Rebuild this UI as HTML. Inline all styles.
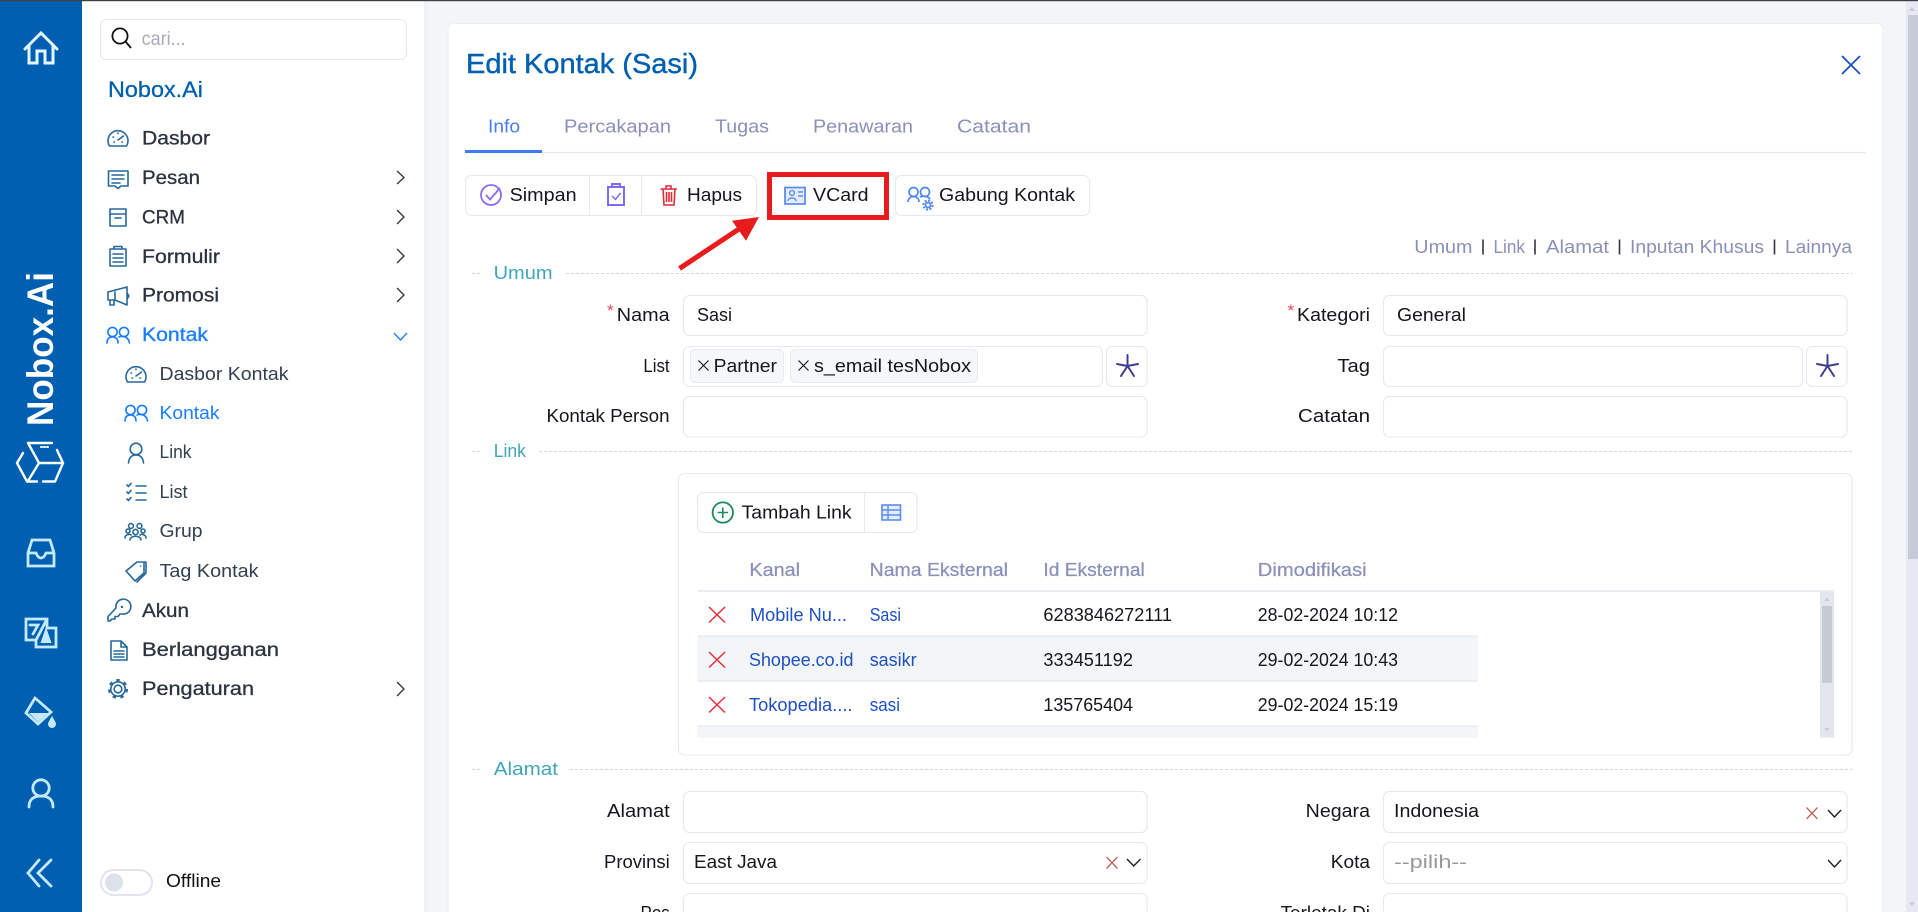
<!DOCTYPE html>
<html lang="id">
<head>
<meta charset="utf-8">
<title>Edit Kontak</title>
<style>
html,body{margin:0;padding:0;width:1918px;height:912px;overflow:hidden;background:#f3f6f9}
svg{display:block}
text{font-family:"Liberation Sans",sans-serif;white-space:pre}
.m{font-size:19.5px;fill:#2b3340;stroke:#2b3340;stroke-width:.3}
.s{font-size:18.5px;fill:#33404f}
.b{font-size:18px;fill:#14161c}
.t{font-size:18.5px;fill:#8a90b8}
.h{font-size:18.5px;fill:#8a90b8;stroke:#8a90b8;stroke-width:.25}
.sec{font-size:18.5px;fill:#3fa5b8}
.l{font-size:18.5px;fill:#1f4fc4}
.d{font-size:18.5px;fill:#15171c}
.f{fill:#fff;stroke:#e6e8ee;stroke-width:1.1}
.dash{stroke:#d4d6dc;stroke-width:1;stroke-dasharray:3 2;fill:none}
.ic{fill:none;stroke:#26689c;stroke-width:1.6;stroke-linejoin:round;stroke-linecap:round}
.ib{fill:none;stroke:#1a7dff;stroke-width:1.6;stroke-linejoin:round;stroke-linecap:round}
.r{fill:none;stroke:#c5eaff;stroke-width:2.8;stroke-linejoin:miter;stroke-linecap:round}
.x{fill:none;stroke:#e0303c;stroke-width:1.5}
.star{fill:none;stroke:#3f3d8f;stroke-width:2;stroke-linecap:round}
.chev{fill:none;stroke:#2b3340;stroke-width:1.3}
</style>
</head>
<body>
<svg width="1918" height="912" viewBox="0 0 1918 912" xmlns="http://www.w3.org/2000/svg">
<rect width="1918" height="912" fill="#f3f6f9"/>

<!-- page scrollbar -->
<rect x="1906" y="1" width="12" height="911" fill="#e6e9f1"/>
<rect x="1908" y="15" width="10" height="544" fill="#c6cbd7"/>
<path d="M1909 11l3-4 3 4z" fill="#c6cbd7"/>
<path d="M1909 902l3 4 3-4z" fill="#c6cbd7"/>

<!-- left rail -->
<rect x="0" y="0" width="82" height="912" fill="#005fb0"/>
<path d="M25 49 L41 33 L57 49 M29 46 V63 H37 V51 H45 V63 H53 V46" fill="none" stroke="#e4f5ff" stroke-width="3" stroke-linejoin="miter" stroke-linecap="round"/>
<text transform="translate(53 426) rotate(-90)" font-size="37" font-weight="700" fill="#fff" textLength="154" lengthAdjust="spacingAndGlyphs">Nobox.Ai</text>
<g fill="none" stroke="#fff" stroke-width="2.4" stroke-linecap="round" stroke-linejoin="round">
<path d="M23 453 L17 463 L27 481.500 H37"/>
<path d="M43 481.500 H55 L63 463 L57 450"/>
<path d="M28 443 H52"/>
<path d="M28 443 L39 463 H63 M39 463 L28 481"/>
<path d="M41 447h1M44 447h1M47 447h1" stroke-width="2"/>
</g>
<path d="M32 540 H50 L54 553 V566 H28 V553 Z M28 553 H36 Q38 558 41 558 Q44 558 46 553 H54" class="r"/>
<path d="M26 619 H47 V628 H56 V647 H36 V640 H26 Z M47 619 L36 640" class="r" stroke-width="2.400"/>
<path d="M30 625 H38 L33 634" class="r" stroke-width="2"/>
<path d="M46 627 L51.500 643 H40.500 Z" fill="#c5eaff"/>
<path d="M35 698 L51 712 L38 724 L26 713 Z" class="r" stroke-linejoin="round"/>
<path d="M29 713 H48 L38 722 Z" fill="#c5eaff"/>
<path d="M52 716 C49 721 48 723 48 724 A4 4 0 0 0 56 724 C56 723 55 721 52 716Z" fill="#c5eaff"/>
<circle cx="41" cy="788" r="8.2" class="r"/>
<path d="M29 807 C29 799 34 796 41 796 C48 796 53 799 53 807" class="r"/>
<path d="M39 860 L28 873 L39 886 M51 860 L38 873 L51 886" class="r"/>

<!-- sidebar -->
<rect x="82" y="0" width="342" height="912" fill="#fff"/>
<rect x="424" y="0" width="4" height="912" fill="#eef1f5"/>
<rect x="100.500" y="19.500" width="306" height="40" rx="6" class="f"/>
<circle cx="120" cy="36" r="7.600" fill="none" stroke="#111" stroke-width="1.800"/>
<path d="M125.500 41.500 L131 48" stroke="#111" stroke-width="1.800" fill="none"/>
<text x="141.600" y="45" font-size="19" fill="#a9abbb" textLength="44" lengthAdjust="spacingAndGlyphs">cari...</text>
<text x="108" y="97" font-size="22" fill="#0060af" stroke="#0060af" stroke-width=".3" textLength="95" lengthAdjust="spacingAndGlyphs">Nobox.Ai</text>

<text x="142" y="144.500" class="m" textLength="68" lengthAdjust="spacingAndGlyphs">Dasbor</text>
<text x="142" y="184" class="m" textLength="58" lengthAdjust="spacingAndGlyphs">Pesan</text>
<text x="142" y="223.500" class="m" textLength="43" lengthAdjust="spacingAndGlyphs">CRM</text>
<text x="142" y="263" class="m" textLength="78" lengthAdjust="spacingAndGlyphs">Formulir</text>
<text x="142" y="301.500" class="m" textLength="77" lengthAdjust="spacingAndGlyphs">Promosi</text>
<text x="142" y="341" class="m" style="fill:#1a7dff;stroke:#1a7dff" textLength="66" lengthAdjust="spacingAndGlyphs">Kontak</text>
<text x="159.500" y="380" class="s" textLength="129" lengthAdjust="spacingAndGlyphs">Dasbor Kontak</text>
<text x="159.500" y="419" class="s" style="fill:#1a7dff" textLength="60" lengthAdjust="spacingAndGlyphs">Kontak</text>
<text x="159.500" y="458" class="s" textLength="32" lengthAdjust="spacingAndGlyphs">Link</text>
<text x="159.500" y="498" class="s" textLength="28" lengthAdjust="spacingAndGlyphs">List</text>
<text x="159.500" y="537" class="s" textLength="43" lengthAdjust="spacingAndGlyphs">Grup</text>
<text x="159.500" y="577" class="s" textLength="99" lengthAdjust="spacingAndGlyphs">Tag Kontak</text>
<text x="142" y="617" class="m" textLength="47" lengthAdjust="spacingAndGlyphs">Akun</text>
<text x="142" y="656" class="m" textLength="137" lengthAdjust="spacingAndGlyphs">Berlangganan</text>
<text x="142" y="695" class="m" textLength="112" lengthAdjust="spacingAndGlyphs">Pengaturan</text>
<text x="166" y="887" font-size="18" fill="#111" textLength="55" lengthAdjust="spacingAndGlyphs">Offline</text>
<rect x="101" y="870" width="51" height="25" rx="12.500" fill="#fff" stroke="#e1e4ee" stroke-width="2"/>
<circle cx="114" cy="882.500" r="9" fill="#dde1ec"/>

<!-- sidebar chevrons -->
<path d="M397 171l7 6.500-7 6.500M397 210l7 7-7 7M397 249l7 7-7 7M397 288l7 7-7 7M397 682l7 7-7 7" class="chev"/>
<path d="M394 333l6.500 7 6.500-7" fill="none" stroke="#1a7dff" stroke-width="1.300"/>

<!-- sidebar icons -->
<path d="M109.500 146 A10 10 0 1 1 126.500 146 Z" class="ic"/>
<path d="M118 140 L123.500 136 M113 137h.5M118 133v.5M114 142h.5M122 142h.5" class="ic"/>
<path d="M108.500 171 H128 V186 H121 L118 188.500 L115 186 H108.500 Z M112 175 H124 M112 179 H124 M112 183 H120" class="ic"/>
<path d="M110 214 H126 V226 H110 Z M110 214 V209 H126 V214 M115 218 H121" class="ic"/>
<path d="M110 249 H126 V266 H110 Z M114 249 V246.500 H122 V249 M113 254 H123 M113 258 H123 M113 262 H123" class="ic"/>
<path d="M108 292 L127 287 V305 L115 300 H108 Z M115 292 V300 M110 300 V305 H114 V300 M127 293 L129 296 L127 299" class="ic"/>
<g class="ib">
<circle cx="112.500" cy="332" r="4.600"/><path d="M107 343 C107 339 109 337 112.500 337 C116 337 118 339 118 343"/>
<circle cx="124" cy="332" r="4.600"/><path d="M119 337 C124 335 129 338 129.500 343"/>
</g>
<path d="M127.500 382 A10 10 0 1 1 144.500 382 Z M136 376 L141.500 372 M131 373h.5M136 369v.5M132 378h.5M140 378h.5" class="ic"/>
<g class="ib">
<circle cx="130.500" cy="410" r="4.600"/><path d="M125 421 C125 417 127 415 130.500 415 C134 415 136 417 136 421"/>
<circle cx="142" cy="410" r="4.600"/><path d="M137 415 C142 413 147 416 147.500 421"/>
</g>
<circle cx="136" cy="449" r="5.800" class="ic"/>
<path d="M128.500 463 C129 457 132 455 136 455 C140 455 143 457 143.500 463" class="ic"/>
<path d="M136 486 H146 M136 493 H146 M136 500 H146 M127 485l1.500 1.500 2.500-3M127 492l1.500 1.500 2.500-3M127 499l1.500 1.500 2.500-3" class="ic"/>
<g class="ic" stroke-width="1.400">
<circle cx="131" cy="526" r="2.400"/><circle cx="139.500" cy="526" r="2.400"/><circle cx="135.500" cy="532" r="2.600"/><circle cx="128" cy="531" r="2"/><circle cx="143" cy="531" r="2"/>
<path d="M125 538 C125 534 130 534 131 535 M146 538 C146 534 141 534 140 535 M130 540 C130 535 141 535 141 540"/>
</g>
<path d="M126 571 L137 562 H144 V573 L135 581 Z M144 562 H146 V573 L137 582" class="ic"/>
<circle cx="140.500" cy="566" r=".8" fill="#26689c"/>
<path d="M108 621 V616.500 L116 608 A7.500 7.500 0 1 1 122 614 L120 614 L118 616.500 H115 V619 H112 L110 621 Z" class="ic"/>
<circle cx="122" cy="607" r="1.200" fill="#26689c"/>
<path d="M111 641 H121 L127 647 V660 H111 Z M121 641 V647 H127 M114 651 H124 M114 654 H124 M114 657 H124" class="ic"/>
<circle cx="118" cy="689" r="3.800" class="ic"/>
<circle cx="118" cy="689" r="7.200" class="ic" stroke-width="1.500"/>
<circle cx="118" cy="689" r="9" fill="none" stroke="#26689c" stroke-width="2" stroke-dasharray="3.500 4.570"/>

<!-- main card -->
<rect x="448" y="23.500" width="1435" height="900" rx="6" fill="#fff" stroke="#ebeef3"/>
<text x="466" y="73" font-size="28" fill="#0060af" stroke="#0060af" stroke-width=".4" textLength="232" lengthAdjust="spacingAndGlyphs">Edit Kontak (Sasi)</text>
<path d="M1842 56 L1860 74 M1860 56 L1842 74" fill="none" stroke="#1a4fc4" stroke-width="1.800"/>

<!-- tabs -->
<path d="M465 152.500 H1866" stroke="#e6e8ee" stroke-width="1.200"/>
<rect x="465" y="150" width="77" height="3" fill="#3b7cf6"/>
<text x="488" y="132.500" class="t" style="fill:#4a7cf0" textLength="32" lengthAdjust="spacingAndGlyphs">Info</text>
<text x="564" y="132.500" class="t" textLength="107" lengthAdjust="spacingAndGlyphs">Percakapan</text>
<text x="715" y="132.500" class="t" textLength="54" lengthAdjust="spacingAndGlyphs">Tugas</text>
<text x="813" y="132.500" class="t" textLength="100" lengthAdjust="spacingAndGlyphs">Penawaran</text>
<text x="957" y="132.500" class="t" textLength="74" lengthAdjust="spacingAndGlyphs">Catatan</text>

<!-- toolbar -->
<rect x="465.500" y="175.500" width="291" height="40" rx="6" class="f"/>
<path d="M589.500 176 V215 M641.500 176 V215" stroke="#e6e8ee" stroke-width="1.100"/>
<circle cx="491" cy="195" r="10" fill="none" stroke="#8b6cf6" stroke-width="1.800"/>
<path d="M486 195 L490 199.500 L500 188" fill="none" stroke="#8b6cf6" stroke-width="1.800"/>
<text x="509.600" y="201" class="b" textLength="67" lengthAdjust="spacingAndGlyphs">Simpan</text>
<path d="M608 187 H624 V205 H608 Z M612 187 V184 H620 V187" fill="none" stroke="#7c6cf6" stroke-width="2"/>
<path d="M612 196 L615.500 199.500 L620.500 193" fill="none" stroke="#7c6cf6" stroke-width="1.500"/>
<path d="M660.500 189 H677 M663 189 L664 205 H674 L675 189 M666 189 V186 H671 V189 M666.500 192 V202 M669 192 V202 M671.500 192 V202" fill="none" stroke="#e02b3c" stroke-width="1.600"/>
<text x="687" y="201" class="b" textLength="55" lengthAdjust="spacingAndGlyphs">Hapus</text>

<rect x="769.500" y="174.500" width="117" height="43" fill="#fff" stroke="#e81c1c" stroke-width="5"/>
<path d="M785 187.500 H805 V204 H785 Z" fill="#e4edfd" stroke="#5b8def" stroke-width="1.800"/>
<circle cx="792" cy="193" r="2.400" fill="none" stroke="#5b8def" stroke-width="1.400"/>
<path d="M788 201 C788 197 796 197 796 201 M798 192 H803 M798 196 H803" fill="none" stroke="#5b8def" stroke-width="1.400"/>
<text x="813" y="201" class="b" textLength="55.600" lengthAdjust="spacingAndGlyphs">VCard</text>

<rect x="895.500" y="175.500" width="194" height="40" rx="6" class="f"/>
<g fill="none" stroke="#4f86f0" stroke-width="1.700">
<circle cx="913.500" cy="192" r="4.500"/><path d="M908 202 C908 198 911 196.500 913.500 196.500 C916 196.500 919 198 919 202"/>
<circle cx="925" cy="192" r="4.500"/><path d="M920 197 C924 195 929 197 930 199"/>
<circle cx="928" cy="205" r="2.500"/>
<circle cx="928" cy="205" r="4.600" stroke-width="2" stroke-dasharray="2 1.600"/>
</g>
<text x="939" y="201" class="b" textLength="136" lengthAdjust="spacingAndGlyphs">Gabung Kontak</text>

<!-- arrow -->
<path d="M679.500 268.500 L742 227" stroke="#e81c1c" stroke-width="5" fill="none"/>
<path d="M759 217 L732 220.700 L746 240.700 Z" fill="#e81c1c"/>

<!-- anchors -->
<text x="1414.300" y="253" class="t" textLength="58.200" lengthAdjust="spacingAndGlyphs">Umum</text>
<text x="1493.500" y="253" class="t" textLength="31.500" lengthAdjust="spacingAndGlyphs">Link</text>
<text x="1546" y="253" class="t" textLength="63" lengthAdjust="spacingAndGlyphs">Alamat</text>
<text x="1630" y="253" class="t" textLength="134" lengthAdjust="spacingAndGlyphs">Inputan Khusus</text>
<text x="1785" y="253" class="t" textLength="67" lengthAdjust="spacingAndGlyphs">Lainnya</text>
<path d="M1483 239.500 V254.500 M1535 239.500 V254.500 M1619.500 239.500 V254.500 M1774.500 239.500 V254.500" stroke="#33363f" stroke-width="1.600"/>

<!-- section Umum -->
<path d="M472 273.500 H481 M566 273.500 H1852.500" class="dash"/>
<text x="493.600" y="279" class="sec" textLength="59" lengthAdjust="spacingAndGlyphs">Umum</text>

<!-- left form -->
<rect x="683.500" y="295.500" width="463.500" height="40" rx="6" class="f"/>
<text x="607" y="316" font-size="17" fill="#ee4455">*</text>
<text x="616.800" y="321" class="b" textLength="52.800" lengthAdjust="spacingAndGlyphs">Nama</text>
<text x="697" y="321" class="b" textLength="35" lengthAdjust="spacingAndGlyphs">Sasi</text>

<rect x="683.500" y="346.500" width="419" height="40" rx="6" class="f"/>
<rect x="1106.500" y="346.500" width="40.500" height="40" rx="6" class="f"/>
<text x="643.400" y="372" class="b" textLength="26.200" lengthAdjust="spacingAndGlyphs">List</text>
<rect x="690.500" y="349.500" width="93" height="33" rx="5" fill="#f5f7f9" stroke="#e9ebf0"/>
<path d="M698.500 360.500 L708.500 370.500 M708.500 360.500 L698.500 370.500" stroke="#14161c" stroke-width="1.100"/>
<text x="713.600" y="372" class="b" textLength="63.400" lengthAdjust="spacingAndGlyphs">Partner</text>
<rect x="790.500" y="349.500" width="187" height="33" rx="5" fill="#f5f7f9" stroke="#e9ebf0"/>
<path d="M798.500 360.500 L808.500 370.500 M808.500 360.500 L798.500 370.500" stroke="#14161c" stroke-width="1.100"/>
<text x="814" y="372" class="b" textLength="157" lengthAdjust="spacingAndGlyphs">s_email tesNobox</text>
<path d="M1127.500 366 V355 M1127.500 366 L1117 364 M1127.500 366 L1138 364 M1127.500 366 L1121 376 M1127.500 366 L1134 376" class="star"/>

<rect x="683.500" y="396.500" width="463.500" height="40.500" rx="6" class="f"/>
<text x="546.500" y="422" class="b" textLength="123" lengthAdjust="spacingAndGlyphs">Kontak Person</text>

<!-- right form -->
<rect x="1383.500" y="295.500" width="463.500" height="40" rx="6" class="f"/>
<text x="1287.500" y="316" font-size="17" fill="#ee4455">*</text>
<text x="1297" y="321" class="b" textLength="73" lengthAdjust="spacingAndGlyphs">Kategori</text>
<text x="1397" y="321" class="b" textLength="69" lengthAdjust="spacingAndGlyphs">General</text>
<rect x="1383.500" y="346.500" width="419" height="40" rx="6" class="f"/>
<rect x="1806.500" y="346.500" width="40.500" height="40" rx="6" class="f"/>
<text x="1337.400" y="372" class="b" textLength="32.600" lengthAdjust="spacingAndGlyphs">Tag</text>
<path d="M1827.500 366 V355 M1827.500 366 L1817 364 M1827.500 366 L1838 364 M1827.500 366 L1821 376 M1827.500 366 L1834 376" class="star"/>
<rect x="1383.500" y="396.500" width="463.500" height="40.500" rx="6" class="f"/>
<text x="1298" y="422" class="b" textLength="72" lengthAdjust="spacingAndGlyphs">Catatan</text>

<!-- section Link -->
<path d="M472 451.500 H481 M539 451.500 H1852.500" class="dash"/>
<text x="493.700" y="457" class="sec" textLength="32.300" lengthAdjust="spacingAndGlyphs">Link</text>

<rect x="678.500" y="473.500" width="1173.500" height="281.500" rx="6" fill="#fff" stroke="#e6e8ee" stroke-width="1.100"/>
<rect x="697.500" y="492.500" width="219.500" height="40" rx="6" class="f"/>
<path d="M864.500 493 V532" stroke="#e6e8ee" stroke-width="1.100"/>
<circle cx="722.800" cy="512.500" r="10.200" fill="none" stroke="#1f8a5b" stroke-width="1.800"/>
<path d="M717.500 512.500 H728 M722.800 507.500 V518" stroke="#1f8a5b" stroke-width="1.600"/>
<text x="741.600" y="518.500" class="b" textLength="110" lengthAdjust="spacingAndGlyphs">Tambah Link</text>
<rect x="882" y="505" width="18.500" height="15" fill="#e4edfd" stroke="#5b8def" stroke-width="1.600"/>
<path d="M882 510 H900.500 M882 515 H900.500 M888 505 V520" stroke="#5b8def" stroke-width="1.400"/>

<text x="749.400" y="576" class="h" textLength="50.600" lengthAdjust="spacingAndGlyphs">Kanal</text>
<text x="869.700" y="576" class="h" textLength="138.300" lengthAdjust="spacingAndGlyphs">Nama Eksternal</text>
<text x="1043.400" y="576" class="h" textLength="101.400" lengthAdjust="spacingAndGlyphs">Id Eksternal</text>
<text x="1257.800" y="576" class="h" textLength="108.800" lengthAdjust="spacingAndGlyphs">Dimodifikasi</text>

<rect x="697.500" y="590" width="1136.500" height="2" fill="#e9edf3"/>
<rect x="697.500" y="636" width="780.500" height="45" fill="#f3f6f9"/>
<rect x="697.500" y="726" width="780.500" height="11.700" fill="#f3f6f9"/>
<path d="M697.500 636 H1478 M697.500 681 H1478 M697.500 726 H1478" stroke="#e4e8ee" stroke-width="1.200"/>

<path d="M709 607 L725 622.500 M725 607 L709 622.500" class="x"/>
<path d="M709 652 L725 667.500 M725 652 L709 667.500" class="x"/>
<path d="M709 697 L725 712.500 M725 697 L709 712.500" class="x"/>

<text x="750" y="621" class="l" textLength="97" lengthAdjust="spacingAndGlyphs">Mobile Nu...</text>
<text x="869.700" y="621" class="l" textLength="31.300" lengthAdjust="spacingAndGlyphs">Sasi</text>
<text x="1043.400" y="621" class="d" textLength="128.600" lengthAdjust="spacingAndGlyphs">6283846272111</text>
<text x="1257.800" y="621" class="d" textLength="140.200" lengthAdjust="spacingAndGlyphs">28-02-2024 10:12</text>

<text x="749" y="666" class="l" textLength="104.500" lengthAdjust="spacingAndGlyphs">Shopee.co.id</text>
<text x="869.700" y="666" class="l" textLength="46.900" lengthAdjust="spacingAndGlyphs">sasikr</text>
<text x="1043.400" y="666" class="d" textLength="89.600" lengthAdjust="spacingAndGlyphs">333451192</text>
<text x="1257.800" y="666" class="d" textLength="140.200" lengthAdjust="spacingAndGlyphs">29-02-2024 10:43</text>

<text x="749" y="711" class="l" textLength="103.500" lengthAdjust="spacingAndGlyphs">Tokopedia....</text>
<text x="869.700" y="711" class="l" textLength="30.300" lengthAdjust="spacingAndGlyphs">sasi</text>
<text x="1043.400" y="711" class="d" textLength="89.600" lengthAdjust="spacingAndGlyphs">135765404</text>
<text x="1257.800" y="711" class="d" textLength="140.200" lengthAdjust="spacingAndGlyphs">29-02-2024 15:19</text>

<!-- inner scrollbar -->
<rect x="1820" y="592" width="14" height="145.700" fill="#e3e6ec"/>
<rect x="1822" y="606" width="10" height="77" fill="#c5cad3"/>
<path d="M1824.500 601 l2.500-3.500 2.500 3.500z" fill="#c5cad3"/>
<path d="M1824.500 728 l2.500 3.500 2.500-3.500z" fill="#c5cad3"/>

<!-- section Alamat -->
<path d="M472 769.500 H481 M570 769.500 H1852.500" class="dash"/>
<text x="493.800" y="775" class="sec" textLength="64.200" lengthAdjust="spacingAndGlyphs">Alamat</text>

<rect x="683.500" y="791.500" width="463.500" height="41" rx="6" class="f"/>
<text x="607" y="817" class="b" textLength="62.800" lengthAdjust="spacingAndGlyphs">Alamat</text>
<rect x="683.500" y="842.500" width="463.500" height="41" rx="6" class="f"/>
<text x="604" y="868" class="b" textLength="65.800" lengthAdjust="spacingAndGlyphs">Provinsi</text>
<text x="694" y="868" class="b" textLength="83" lengthAdjust="spacingAndGlyphs">East Java</text>
<path d="M1106.500 857 L1117.500 868.500 M1117.500 857 L1106.500 868.500" fill="none" stroke="#c0655a" stroke-width="1.300"/>
<path d="M1127 859 L1133.700 866 L1140.500 859" fill="none" stroke="#1c1f26" stroke-width="1.400"/>
<rect x="683.500" y="893.500" width="463.500" height="40" rx="6" class="f"/>
<text x="640.500" y="919" class="b" textLength="29.300" lengthAdjust="spacingAndGlyphs">Pos</text>

<rect x="1383.500" y="791.500" width="463.500" height="41" rx="6" class="f"/>
<text x="1305.700" y="817" class="b" textLength="64.300" lengthAdjust="spacingAndGlyphs">Negara</text>
<text x="1394" y="817" class="b" textLength="85" lengthAdjust="spacingAndGlyphs">Indonesia</text>
<path d="M1806.500 807.500 L1817.500 819 M1817.500 807.500 L1806.500 819" fill="none" stroke="#c0655a" stroke-width="1.300"/>
<path d="M1828 810 L1834.500 817 L1841 810" fill="none" stroke="#1c1f26" stroke-width="1.400"/>
<rect x="1383.500" y="842.500" width="463.500" height="41" rx="6" class="f"/>
<text x="1330.800" y="868" class="b" textLength="39.200" lengthAdjust="spacingAndGlyphs">Kota</text>
<text x="1394" y="868" class="b" style="fill:#999" textLength="73" lengthAdjust="spacingAndGlyphs">--pilih--</text>
<path d="M1828 860 L1834.500 867 L1841 860" fill="none" stroke="#1c1f26" stroke-width="1.400"/>
<rect x="1383.500" y="893.500" width="463.500" height="40" rx="6" class="f"/>
<text x="1280.600" y="919" class="b" textLength="89.400" lengthAdjust="spacingAndGlyphs">Terletak Di</text>

<!-- top line -->
<rect x="0" y="0" width="1918" height="1.200" fill="#3c4043"/>
</svg>
</body>
</html>
